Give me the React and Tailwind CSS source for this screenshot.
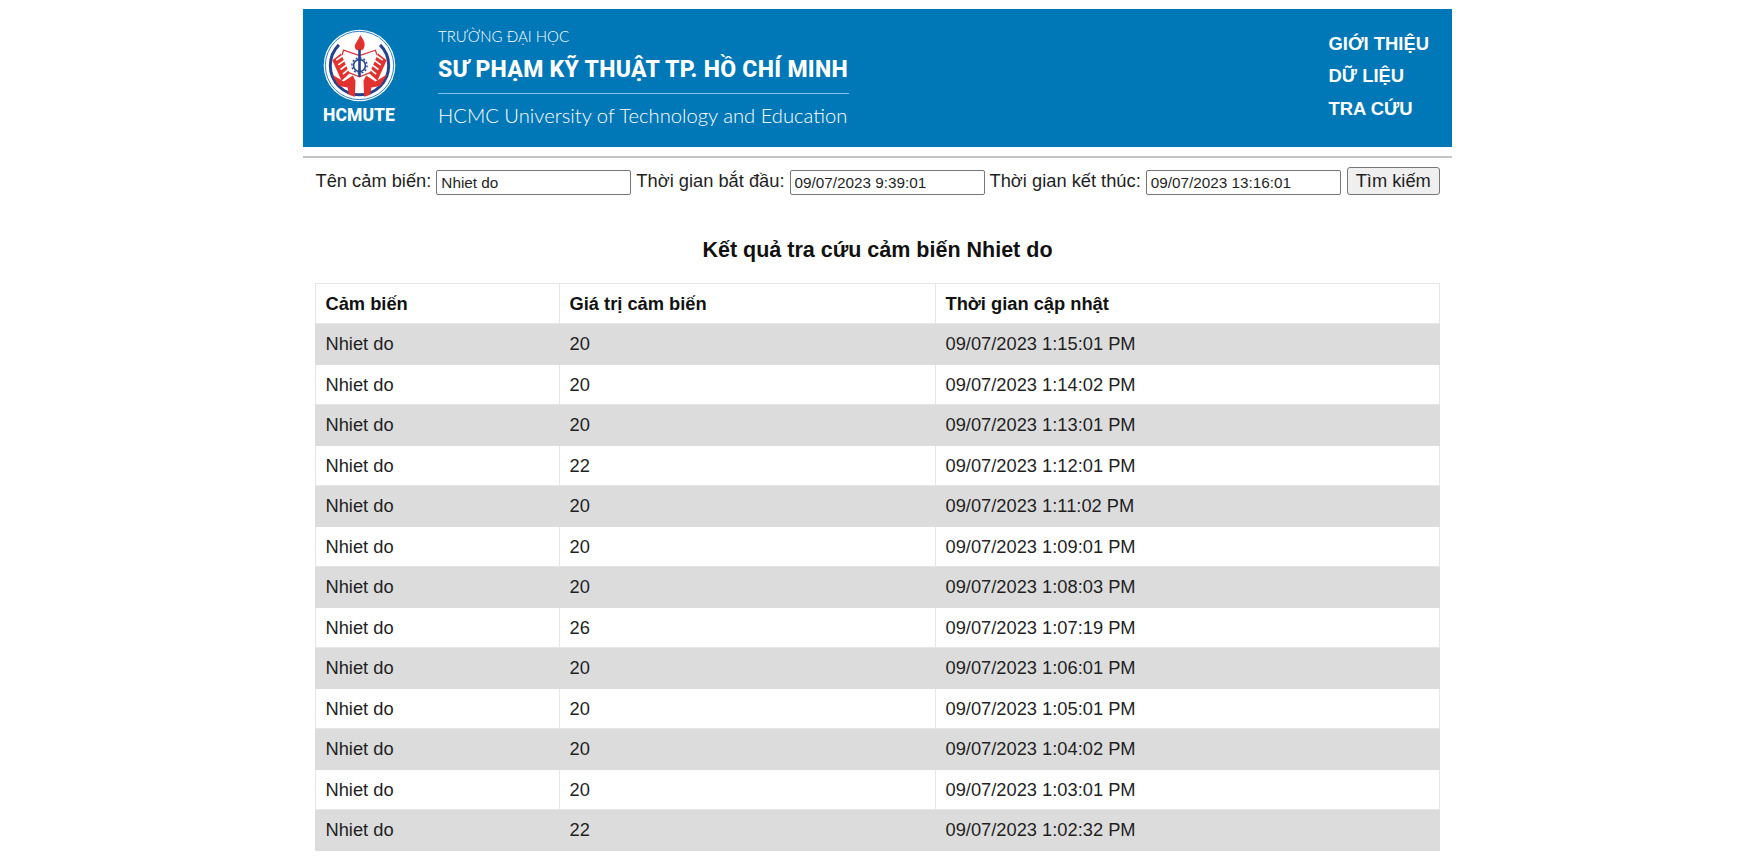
const rows = [
  ["20", "09/07/2023 1:15:01 PM"],
  ["20", "09/07/2023 1:14:02 PM"],
  ["20", "09/07/2023 1:13:01 PM"],
  ["22", "09/07/2023 1:12:01 PM"],
  ["20", "09/07/2023 1:11:02 PM"],
  ["20", "09/07/2023 1:09:01 PM"],
  ["20", "09/07/2023 1:08:03 PM"],
  ["26", "09/07/2023 1:07:19 PM"],
  ["20", "09/07/2023 1:06:01 PM"],
  ["20", "09/07/2023 1:05:01 PM"],
  ["20", "09/07/2023 1:04:02 PM"],
  ["20", "09/07/2023 1:03:01 PM"],
  ["22", "09/07/2023 1:02:32 PM"],
];

function Logo() {
  return (
    <svg width="73" height="73" viewBox="-110 -110 220 220" className="block">
      <circle r="108" fill="#fff" />
      <circle r="103" fill="none" stroke="#2f7fc1" strokeWidth="3" />
      <path d="M-62 -62 A88 88 0 1 0 62 -62" fill="none" stroke="#24418f" strokeWidth="9" />
      <path d="M-48 -46 L0 -30 L48 -46 L66 8 L0 34 L-66 8 Z" fill="#fff" stroke="#d8343a" strokeWidth="4" />
      <path d="M-82 -16 L-56 -36 L-30 24 L-54 46 Z M82 -16 L56 -36 L30 24 L54 46 Z" fill="#e2322f" />
      <path d="M-70 -16 L-50 -30 M-64 -2 L-44 -16 M-57 12 L-38 -2 M-50 26 L-33 12 M70 -16 L50 -30 M64 -2 L44 -16 M57 12 L38 -2 M50 26 L33 12" stroke="#fff" strokeWidth="5" />
      <path d="M-84 26 L-48 48 L-20 30 L-12 46 L-14 94 L-32 88 L-36 66 L-62 62 Z M84 26 L48 48 L20 30 L12 46 L14 94 L32 88 L36 66 L62 62 Z" fill="#e2322f" />
      <path d="M2 -92 C14 -76 20 -64 12 -50 C8 -44 -8 -44 -12 -50 C-20 -64 -4 -72 2 -92 Z" fill="#e2322f" />
      <path d="M-4 -48 L4 -48 L4 34 L-4 34 Z" fill="#24418f" />
      <circle r="18" fill="none" stroke="#24418f" strokeWidth="5" />
      <circle r="23" fill="none" stroke="#24418f" strokeWidth="4" strokeDasharray="6 6" />
    </svg>
  );
}

export default function App() {
  return (
    <div className="w-[1149px] mx-auto pt-[9px] font-['Liberation_Sans',Arial,sans-serif] text-[18.3px] text-[#1f1f1f]">
      <header className="h-[138px] bg-[#0077b6] flex items-center text-white pl-[20px]">
        <div className="w-[72px] flex flex-col items-center mt-[-2px]">
          <Logo />
          <div className="text-[17.5px] leading-[20px] font-extrabold mt-[3px] font-['Roboto',sans-serif] tracking-[0.1px]">HCMUTE</div>
        </div>
        <div className="ml-[43px] w-[411px]">
          <div className="font-['Lato',sans-serif] font-light text-[15px] leading-[20px] mt-[-2px]">TRƯỜNG ĐẠI HỌC</div>
          <div className="font-['Roboto',sans-serif] font-extrabold text-[23px] leading-[32px] mt-[8px] whitespace-nowrap tracking-[0.3px]">SƯ PHẠM KỸ THUẬT TP. HỒ CHÍ MINH</div>
          <div className="h-[1px] bg-[#7cc4ec] mt-[7px]" />
          <div className="font-['Lato',sans-serif] font-light text-[20.2px] leading-[26px] mt-[8px] whitespace-nowrap">HCMC University of Technology and Education</div>
        </div>
        <nav className="ml-auto w-[123.5px] mt-[-3px] flex flex-col font-bold text-[18.4px] leading-[32.5px]">
          <span>GIỚI THIỆU</span>
          <span>DỮ LIỆU</span>
          <span>TRA CỨU</span>
        </nav>
      </header>

      <hr className="mt-[9px] border-0 border-t-2 border-[#c4c4c4]" />

      <form className="mt-[9px] ml-[12.5px] h-[28px] flex items-center whitespace-nowrap">
        <label>Tên cảm biến:</label>
        <input readOnly value="Nhiet do" className="ml-[5px] w-[195px] h-[25px] mt-[3px] border border-[#767676] rounded-[2px] px-[4px] text-[15.3px] text-[#1f1f1f] bg-white" />
        <label className="ml-[5px]">Thời gian bắt đầu:</label>
        <input readOnly value="09/07/2023 9:39:01" className="ml-[5px] w-[195px] h-[25px] mt-[3px] border border-[#767676] rounded-[2px] px-[4px] text-[15.3px] text-[#1f1f1f] bg-white" />
        <label className="ml-[5px]">Thời gian kết thúc:</label>
        <input readOnly value="09/07/2023 13:16:01" className="ml-[5px] w-[195px] h-[25px] mt-[3px] border border-[#767676] rounded-[2px] px-[4px] text-[15.3px] text-[#1f1f1f] bg-white" />
        <button type="button" className="ml-[6px] w-[93px] h-[28px] border border-[#767676] rounded-[3px] bg-[#efefef] text-[18.3px] leading-none text-[#1f1f1f]">Tìm kiếm</button>
      </form>

      <h2 className="mt-[43px] text-center font-bold text-[21.5px] leading-[24px] text-[#111]">Kết quả tra cứu cảm biến Nhiet do</h2>

      <table className="mt-[20.5px] ml-[12px] w-[1125px] border-collapse table-fixed">
        <colgroup>
          <col className="w-[244px]" />
          <col className="w-[376px]" />
          <col />
        </colgroup>
        <thead>
          <tr className="h-[40.5px] text-[#111]">
            {["Cảm biến", "Giá trị cảm biến", "Thời gian cập nhật"].map((t) => (
              <th key={t} className="border border-[#e6e6e6] px-[9.5px] text-left font-bold">{t}</th>
            ))}
          </tr>
        </thead>
        <tbody>
          {rows.map(([v, t], i) => (
            <tr key={i} className={i % 2 === 0 ? "h-[40.5px] bg-[#dcdcdc]" : "h-[40.5px] bg-white"}>
              <td className={i % 2 === 0 ? "border border-[#dcdcdc] px-[9.5px]" : "border border-[#e6e6e6] px-[9.5px]"}>Nhiet do</td>
              <td className={i % 2 === 0 ? "border border-[#dcdcdc] px-[9.5px]" : "border border-[#e6e6e6] px-[9.5px]"}>{v}</td>
              <td className={i % 2 === 0 ? "border border-[#dcdcdc] px-[9.5px]" : "border border-[#e6e6e6] px-[9.5px]"}>{t}</td>
            </tr>
          ))}
        </tbody>
      </table>
    </div>
  );
}
